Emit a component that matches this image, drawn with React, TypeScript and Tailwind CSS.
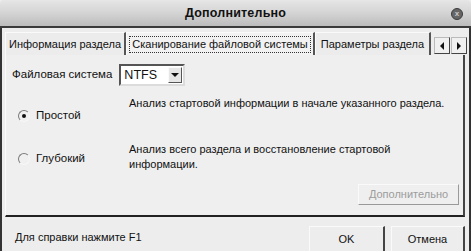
import React from 'react';

const font = { fontFamily: '"Liberation Sans", Arial, sans-serif' };

const Radio: React.FC<{ checked?: boolean; label: string }> = ({ checked, label }) => (
    <div className="flex items-center gap-[6px] w-[111px]">
        <span className="w-[12px] h-[12px] rounded-full border border-t-[#7a7a7a] border-l-[#7a7a7a] border-r-[#f6f6f6] border-b-[#f6f6f6] bg-[#f0f0f0] flex items-center justify-center">
            {checked && <span className="w-[4px] h-[4px] rounded-full bg-[#111]" />}
        </span>
        <span className="text-[11.5px] text-[#111] whitespace-nowrap">{label}</span>
    </div>
);

const Tab: React.FC<{ label: string; active?: boolean; w: string }> = ({ label, active, w }) => (
    <div
        className={`${w} h-[23px] flex items-center justify-center text-[11px] text-[#111] whitespace-nowrap border-l border-l-[#fafafa] border-t border-t-[#fafafa] border-r-2 border-r-[#555] ${active ? 'bg-[#f2f2f2]' : 'bg-[#ececec]'}`}
    >
        <span className={active ? 'outline outline-1 outline-dotted outline-[#333] px-[2px] leading-[15px]' : 'leading-[15px]'}>{label}</span>
    </div>
);

const Arrow: React.FC<{ dir: 'left' | 'right' }> = ({ dir }) => (
    <div className="w-[16px] h-[17px] bg-[#f0f0f0] border border-[#bbb] border-r-[#444] border-b-[#444] flex items-center justify-center">
        <span
            className={
                dir === 'left'
                    ? 'w-0 h-0 border-t-[4px] border-b-[4px] border-r-[4px] border-t-transparent border-b-transparent border-r-[#111]'
                    : 'w-0 h-0 border-t-[4px] border-b-[4px] border-l-[4px] border-t-transparent border-b-transparent border-l-[#111]'
            }
        />
    </div>
);

export default function App() {
    return (
        <div className="w-[471px] h-[251px] bg-[#ededed] overflow-hidden flex flex-col" style={font}>
            {/* title bar */}
            <div className="relative h-[28px] shrink-0 rounded-t-[4px] bg-gradient-to-b from-[#e6e6e6] via-[#d4d4d4] to-[#bcbcbc] border-b-2 border-b-[#3a3a3a] flex items-center justify-center">
                <span className="text-[12.5px] font-bold text-[#111] tracking-[0.2px]">Дополнительно</span>
                <div className="absolute right-[8px] top-[8px] w-[12px] h-[12px] rounded-full bg-[#666] border border-[#3c3c3c] flex items-center justify-center">
                    <span className="text-[8px] leading-none text-[#c8c8c8] font-bold">x</span>
                </div>
            </div>

            <div className="flex-1 flex flex-col border-l-2 border-l-[#333] border-r-2 border-r-[#333] border-b-2 border-b-[#333]">
                {/* tabs */}
                <div className="flex items-end h-[27px] pl-[3px] pr-[2px] shrink-0">
                    <Tab label="Информация раздела" w="w-[121px]" />
                    <Tab label="Сканирование файловой системы" w="w-[189px]" active />
                    <Tab label="Параметры раздела" w="w-[116px]" />
                    <div className="flex ml-[3px] mb-[1px] gap-[1px]">
                        <Arrow dir="left" />
                        <Arrow dir="right" />
                    </div>
                </div>

                {/* panel */}
                <div className="h-[162px] shrink-0 ml-[3px] mr-[4px] bg-[#efefef] border-l border-l-[#fafafa] border-r-2 border-r-[#444] border-b-2 border-b-[#222] flex flex-col pl-[6px] pr-[4px]">
                    <div className="flex items-center gap-[7px] mt-[9px] h-[22px]">
                        <span className="text-[11.5px] text-[#111] whitespace-nowrap">Файловая система</span>
                        <div className="w-[66px] h-[22px] bg-white border-2 border-t-[#555] border-l-[#555] border-r-[#dcdcdc] border-b-[#dcdcdc] flex items-center justify-between pl-[3px] pr-[1px]">
                            <span className="text-[12.5px] text-[#111]">NTFS</span>
                            <div className="w-[14px] h-[16px] bg-[#e6e6e6] border border-[#fafafa] border-r-[#555] border-b-[#555] flex items-center justify-center">
                                <span className="w-0 h-0 border-l-[4px] border-r-[4px] border-t-[4px] border-l-transparent border-r-transparent border-t-[#111]" />
                            </div>
                        </div>
                    </div>

                    <div className="flex mt-[10px] pl-[6px] h-[30px]">
                        <div className="pt-[11px]"><Radio checked label="Простой" /></div>
                        <div className="text-[11px] text-[#111] leading-[15px] whitespace-nowrap">Анализ стартовой информации в начале указанного раздела.</div>
                    </div>

                    <div className="flex mt-[16px] pl-[6px] h-[30px]">
                        <div className="pt-[8px]"><Radio label="Глубокий" /></div>
                        <div className="text-[11px] text-[#111] leading-[15px]">
                            <div className="whitespace-nowrap">Анализ всего раздела и восстановление стартовой</div>
                            <div>информации.</div>
                        </div>
                    </div>

                    <div className="flex justify-end mt-[12px]">
                        <div className="w-[101px] h-[21px] border border-[#fafafa] border-r-[#9a9a9a] border-b-[#9a9a9a] flex items-center justify-center text-[11px] text-[#9c9c9c]">Дополнительно</div>
                    </div>
                </div>

                {/* footer */}
                <div className="flex-1 flex pl-[13px] pr-[4px]">
                    <span className="text-[11px] text-[#111] self-center mt-[6px] whitespace-nowrap">Для справки нажмите F1</span>
                    <div className="ml-auto flex gap-[6px] mt-[9px]">
                        <div className="w-[76px] h-[26px] border border-[#fafafa] border-r-2 border-r-[#444] flex items-center justify-center text-[11px] text-[#111]">OK</div>
                        <div className="w-[74px] h-[26px] border border-[#fafafa] border-r-2 border-r-[#444] flex items-center justify-center text-[11px] text-[#111]">Отмена</div>
                    </div>
                </div>
            </div>
        </div>
    );
}
